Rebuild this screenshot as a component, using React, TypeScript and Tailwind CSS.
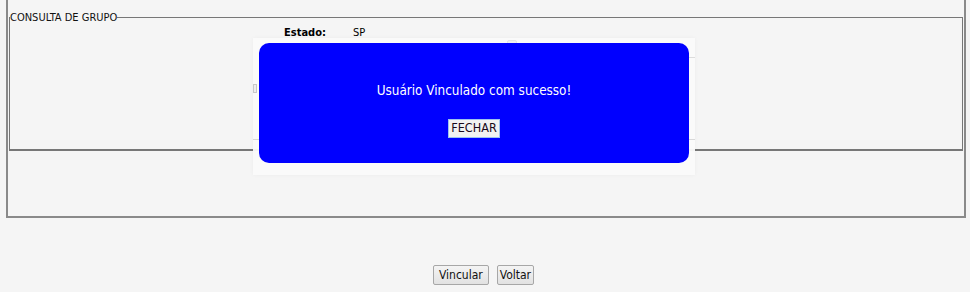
export default function App() {
  return (
    <div className="relative w-[970px] h-[292px] overflow-hidden bg-[#f5f5f5] font-['DejaVu_Sans_Condensed','DejaVu_Sans',sans-serif] text-black">
      {/* outer box, top edge scrolled out of view */}
      <div className="ml-[6px] w-[960px] h-[230px] -mt-[12px] border-2 border-[#8a8a8a] pl-px pr-[1px] pt-[21px]">
        <fieldset className="h-[140px] border border-[#777] border-b-2 border-b-[#777]">
          <legend className="p-0 text-[11px] leading-[13px] text-[#111]">CONSULTA DE GRUPO</legend>
          <div className="flex items-center pl-[274px] pt-[2px] text-[11px] leading-[13px]">
            <span className="w-[69px] font-bold">Estado:</span>
            <span>SP</span>
          </div>
        </fieldset>
      </div>

      <div className="flex justify-center gap-2 pt-[47px] pr-[3px]">
        <button className="h-[20px] px-[5px] text-[12px] leading-none border border-[#a7a7a7] rounded-[2px] bg-gradient-to-b from-[#f4f4f4] to-[#e2e2e2] text-[#111]">
          Vincular
        </button>
        <button className="h-[20px] px-[2px] text-[12px] leading-none border border-[#a7a7a7] rounded-[2px] bg-gradient-to-b from-[#f4f4f4] to-[#e2e2e2] text-[#111]">
          Voltar
        </button>
      </div>

      {/* modal overlay */}
      <div className="absolute left-[253px] top-[38px] w-[442px] h-[137px] px-[6px] pt-[5px] bg-[#fafafa]/95 shadow-[0_0_4px_rgba(0,0,0,0.04)]">
        {/* faint content showing through the overlay */}
        <div className="absolute left-[254px] top-[2px] w-[10px] h-[8px] rounded-[2px] border border-[#e4e4e4] bg-[#f0f0f0]" />
        <div className="absolute left-[252px] top-[19px] w-[190px] h-px bg-[#dcdcdc]" />
        <div className="absolute left-0 top-[46px] w-[4px] h-[9px] border border-[#c8c8c8] bg-[#eee]" />
        <div className="absolute left-0 top-[101px] w-[442px] h-px bg-[#d8d8d8]" />

        <div className="relative h-[120px] rounded-[10px] bg-[#0000ff] flex flex-col items-center pt-[40px]">
          <p className="text-white text-[13.4px] leading-[16px]">Usuário Vinculado com sucesso!</p>
          <button className="mt-[20px] h-[19px] px-[2px] text-[12.5px] leading-none bg-[#f2f2f2] border border-[#9cc2ef] text-[#1a0a1a]">
            FECHAR
          </button>
        </div>
      </div>
    </div>
  );
}
